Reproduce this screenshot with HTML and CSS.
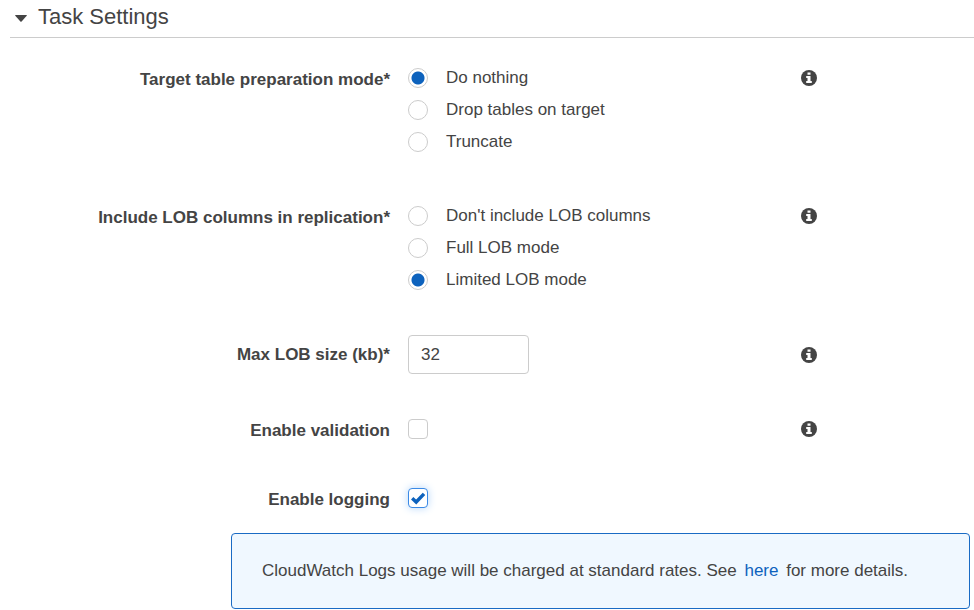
FILE: index.html
```html
<!DOCTYPE html>
<html lang="en">
<head>
<meta charset="utf-8">
<meta name="viewport" content="width=device-width, initial-scale=1">
<title>Task Settings</title>
<link rel="stylesheet" href="styles.css">
</head>
<body>
<svg class="sprite" aria-hidden="true">
  <symbol id="info" viewBox="0 0 16 16">
    <circle cx="8" cy="8" r="8" fill="#444"/>
    <path fill="#fff" d="M6.5 2.5h3v2.3h-3zM5.2 6h4.3v5h1.3v2H5.2v-2h1.3V8H5.2z"/>
  </symbol>
</svg>
<details class="panel" open>
  <summary class="panel-title">
    <svg class="caret" viewBox="0 0 12 7" aria-hidden="true"><path d="M0.5 0h11q.6.3.2.8L6.6 6.6q-.6.5-1.2 0L.3.8Q-.1.3.5 0z" fill="#444"/></svg>
    <h1>Task Settings</h1>
  </summary>
  <form class="settings">
    <div class="row row-first" role="radiogroup" aria-labelledby="prep-label">
      <span class="label" id="prep-label">Target table preparation mode*</span>
      <div class="options">
        <label class="option"><input type="radio" name="prep" checked>Do nothing</label>
        <label class="option"><input type="radio" name="prep">Drop tables on target</label>
        <label class="option"><input type="radio" name="prep">Truncate</label>
      </div>
      <button type="button" class="info" aria-label="Info"><svg><use href="#info"/></svg></button>
    </div>
    <div class="row" role="radiogroup" aria-labelledby="lob-label">
      <span class="label" id="lob-label">Include LOB columns in replication*</span>
      <div class="options">
        <label class="option"><input type="radio" name="lob">Don't include LOB columns</label>
        <label class="option"><input type="radio" name="lob">Full LOB mode</label>
        <label class="option"><input type="radio" name="lob" checked>Limited LOB mode</label>
      </div>
      <button type="button" class="info" aria-label="Info"><svg><use href="#info"/></svg></button>
    </div>
    <div class="row row-center">
      <label class="label" for="size">Max LOB size (kb)*</label>
      <input class="text" type="text" id="size" value="32">
      <button type="button" class="info" aria-label="Info"><svg><use href="#info"/></svg></button>
    </div>
    <div class="row">
      <label class="label" for="validation">Enable validation</label>
      <input type="checkbox" id="validation">
      <button type="button" class="info" aria-label="Info"><svg><use href="#info"/></svg></button>
    </div>
    <div class="row row-last">
      <label class="label" for="logging">Enable logging</label>
      <span class="check">
        <input type="checkbox" id="logging" checked>
        <svg class="tick" viewBox="0 0 20 20" aria-hidden="true"><path d="M4.2 10.2l4 3.8L16 5.8" fill="none" stroke="#0d62bd" stroke-width="3.4"/></svg>
      </span>
    </div>
    <p class="notice">CloudWatch Logs usage will be charged at standard rates. See <a href="#">here</a> for more details.</p>
  </form>
</details>
</body>
</html>
```
FILE: styles.css
```css
* {
  box-sizing: border-box;
}

body {
  margin: 0;
  background: #fff;
  color: #444;
  font: 17px/20px "Liberation Sans", Arial, sans-serif;
}

.sprite {
  position: absolute;
  width: 0;
  height: 0;
}

.panel-title {
  display: flex;
  align-items: center;
  gap: 11px;
  height: 38px;
  margin-left: 10px;
  padding: 0 0 3px 5px;
  border-bottom: 1px solid #ccc;
  cursor: pointer;
}

.panel-title h1 {
  margin: 0;
  font-size: 22px;
  line-height: 28px;
  font-weight: 400;
}

.caret {
  width: 12px;
  height: 7px;
  margin-top: 2px;
}

.settings {
  padding-top: 30px;
}

.row {
  display: grid;
  grid-template-columns: 390fr 375fr 173fr;
  column-gap: 18px;
  align-items: start;
  margin-bottom: 45px;
}

.row-first {
  margin-bottom: 54px;
}

.row-center {
  align-items: center;
}

.row-last {
  margin-bottom: 21px;
}

.label {
  font-weight: 700;
  line-height: 24px;
  text-align: right;
}

.options {
  display: grid;
  gap: 12px;
}

.option {
  display: flex;
  align-items: center;
  gap: 18px;
}

input {
  appearance: none;
  margin: 0;
  border: 1px solid #ccc;
  background: #fff;
}

input[type="radio"],
input[type="checkbox"] {
  display: block;
  flex: none;
  width: 20px;
  height: 20px;
}

input[type="radio"] {
  border-radius: 50%;
}

input[type="radio"]:checked {
  background: radial-gradient(circle, #0d62bd 6px, #fff 7px);
}

input[type="checkbox"] {
  border-radius: 4px;
}

input[type="checkbox"]:checked {
  border-color: #3b8ae6;
  box-shadow: 0 0 8px #b5d6fa;
}

.check {
  display: block;
  position: relative;
  width: 20px;
  height: 20px;
}

.tick {
  position: absolute;
  inset: 0;
  pointer-events: none;
}

.text {
  width: 121px;
  height: 39px;
  padding: 0 12px;
  border-radius: 4px;
  color: inherit;
  font: inherit;
}

.info {
  display: block;
  width: 17px;
  height: 20px;
  padding: 0;
  border: 0;
  background: none;
}

.info svg {
  display: block;
  width: 16px;
  height: 16px;
}

.notice {
  margin: 0 4px 0 231px;
  padding: 27px 30px;
  border: 1px solid #1a6bc4;
  border-radius: 4px;
  background: #f0f8ff;
}

.notice a {
  margin: 0 3px;
  color: #0d62bd;
  text-decoration: none;
}
```
